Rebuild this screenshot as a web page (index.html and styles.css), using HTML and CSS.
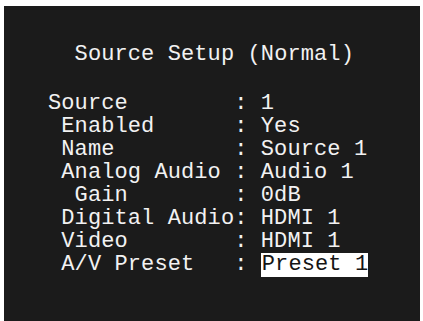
FILE: index.html
```html
<!DOCTYPE html>
<html>
<head>
<meta charset="utf-8">
<link rel="stylesheet" href="styles.css">
</head>
<body>
<div class="screen">
  <div class="title">Source Setup (Normal)</div>
  <div class="menu">
    <div class="row"><span class="label">Source</span><span class="colon">:</span><span class="value">1</span></div>
    <div class="row"><span class="label i1">Enabled</span><span class="colon">:</span><span class="value">Yes</span></div>
    <div class="row"><span class="label i1">Name</span><span class="colon">:</span><span class="value">Source 1</span></div>
    <div class="row"><span class="label i1">Analog Audio</span><span class="colon">:</span><span class="value">Audio 1</span></div>
    <div class="row"><span class="label i2">Gain</span><span class="colon">:</span><span class="value">0dB</span></div>
    <div class="row"><span class="label i1">Digital Audio</span><span class="colon">:</span><span class="value">HDMI 1</span></div>
    <div class="row"><span class="label i1">Video</span><span class="colon">:</span><span class="value">HDMI 1</span></div>
    <div class="row"><span class="label i1">A/V Preset</span><span class="colon">:</span><span class="value sel">Preset 1</span></div>
  </div>
</div>
</body>
</html>
```
FILE: styles.css
```css
html, body {
  margin: 0;
  padding: 0;
  background: #ffffff;
  height: 100%;
  overflow: hidden;
}
.screen {
  margin: 6px 3px 0 4px;
  height: 315px;
  background: #1b1b1b;
  color: #f2f2f2;
  font-family: "Liberation Mono", monospace;
  font-size: 22px;
  line-height: 23px;
  letter-spacing: 0.1px;
  padding: 37px 0 0 44px;
  box-sizing: border-box;
}
.title {
  padding-left: 26.6px;
  white-space: pre;
  margin-bottom: 26px;
}
.menu {
  display: flex;
  flex-direction: column;
}
.row {
  display: flex;
  white-space: pre;
}
.label {
  width: 186.2px;
  box-sizing: border-box;
  flex: none;
}
.i1 { padding-left: 13.3px; }
.i2 { padding-left: 26.6px; }
.colon {
  width: 26.6px;
  flex: none;
}
.sel {
  background: #ffffff;
  color: #151515;
  padding: 0 0 1px 1px;
  line-height: 23px;
}
```
